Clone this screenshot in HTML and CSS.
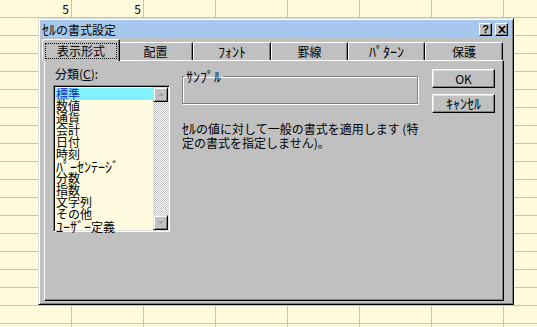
FILE: index.html
```html
<!DOCTYPE html>
<html lang="ja">
<head>
  <meta charset="UTF-8">
  <title>ｾﾙの書式設定</title>
  <link rel="stylesheet" href="styles.css">
</head>
<body>
  <div class="sheet">
    <div class="row">
      <div class="cell">5</div>
      <div class="cell">5</div>
    </div>
  </div>

  <div class="dialog">
    <div class="titlebar">
      <span class="title"><span class="hw">ｾﾙ</span>の書式設定</span>
      <div class="caption-btns">
        <span class="cap-btn help">?</span>
        <span class="cap-btn">
          <svg width="8" height="7" viewBox="0 0 8 7"><path d="M0 0h2l2 2 2-2h2L5 3.5 8 7H6L4 5 2 7H0l3-3.5z" fill="#000"/></svg>
        </span>
      </div>
    </div>

    <div class="tabs">
      <div class="tab active" style="width:74px"><span class="focus">表示形式</span></div>
      <div class="tab" style="width:75px">配置</div>
      <div class="tab" style="width:78px"><span class="hw">ﾌｫﾝﾄ</span></div>
      <div class="tab" style="width:77px">罫線</div>
      <div class="tab" style="width:77px"><span class="hw">ﾊﾟﾀｰﾝ</span></div>
      <div class="tab" style="width:78px">保護</div>
    </div>

    <div class="panel">
      <div class="col-left">
        <div class="label">分類(<u>C</u>):</div>
        <div class="listbox">
          <ul class="items">
            <li class="sel">標準</li>
            <li>数値</li>
            <li>通貨</li>
            <li>会計</li>
            <li>日付</li>
            <li>時刻</li>
            <li><span class="hw">ﾊﾟｰｾﾝﾃｰｼﾞ</span></li>
            <li>分数</li>
            <li>指数</li>
            <li>文字列</li>
            <li>その他</li>
            <li><span class="hw">ﾕｰｻﾞｰ</span>定義</li>
          </ul>
          <div class="scrollbar">
            <div class="sb-btn"><span class="arrow up"></span></div>
            <div class="sb-track"></div>
            <div class="sb-btn"><span class="arrow down"></span></div>
          </div>
        </div>
      </div>

      <div class="col-mid">
        <fieldset class="sample">
          <legend><span class="hw">ｻﾝﾌﾟﾙ</span></legend>
        </fieldset>
        <p class="desc"><span class="hw">ｾﾙ</span>の値に対して一般の書式を適用します (特<br>定の書式を指定しません)。</p>
      </div>

      <div class="col-right">
        <button class="btn">OK</button>
        <button class="btn"><span class="hw">ｷｬﾝｾﾙ</span></button>
      </div>
    </div>
  </div>
</body>
</html>
```

FILE: styles.css
```css
* {
  margin: 0;
  padding: 0;
  box-sizing: border-box;
}
body {
  width: 537px;
  height: 327px;
  overflow: hidden;
  font-family: "Noto Sans CJK JP", "DejaVu Sans", sans-serif;
  font-size: 12px;
  color: #000;
  position: relative;
}
/* half-width katakana is drawn a little larger, like the old UI font */
.hw {
  font-size: 14px;
}
.sheet {
  width: 537px;
  height: 327px;
  background-color: #fffadc;
  background-image:
    linear-gradient(to right, transparent 71px, #cdc5a3 71px),
    linear-gradient(to bottom, transparent 17px, #cdc5a3 17px);
  background-size: 72px 18px;
}
.row {
  display: flex;
}
.cell {
  width: 72px;
  height: 17px;
  line-height: 17px;
  text-align: right;
  padding-right: 3px;
}

/* dialog window */
.dialog {
  position: absolute;
  left: 38px;
  top: 18px;
  width: 476px;
  height: 287px;
  background: #c0c0c0;
  border: 1px solid;
  border-color: #dfdfdf #000 #000 #dfdfdf;
  box-shadow: inset 1px 1px #fff, inset -1px -1px #808080;
  padding: 1px 2px;
  display: flex;
  flex-direction: column;
}
.titlebar {
  height: 18px;
  background: #a6c8ee;
  display: flex;
  align-items: center;
  justify-content: space-between;
  padding: 0 3px 0 1px;
}
.title {
  line-height: 18px;
}
.caption-btns {
  display: flex;
  gap: 3px;
}
.cap-btn {
  width: 13px;
  height: 13px;
  background: #c0c0c0;
  border: 1px solid;
  border-color: #fff #000 #000 #fff;
  box-shadow: inset -1px -1px #808080;
  display: flex;
  align-items: center;
  justify-content: center;
  font-family: "Liberation Sans", sans-serif;
  font-weight: bold;
  font-size: 11px;
  line-height: 1;
}

/* tabs */
.tabs {
  height: 22px;
  display: flex;
  align-items: flex-end;
  padding-left: 3px;
}
.tab {
  height: 18px;
  border: 1px solid;
  border-bottom: none;
  border-color: #fff #000 transparent #fff;
  border-radius: 2px 2px 0 0;
  box-shadow: inset -1px 0 #808080;
  text-align: center;
  line-height: 17px;
  background: #c0c0c0;
}
.tab.active {
  height: 22px;
  margin: 0 -2px -1px;
  position: relative;
  z-index: 1;
  width: 78px !important;
  padding-top: 3px;
}
.focus {
  display: block;
  margin: 0 2px;
  height: 16px;
  line-height: 15px;
  outline: 1px dotted #000;
  outline-offset: -1px;
}

/* tab page */
.panel {
  height: 241px;
  margin: 0 7px 2px 3px;
  border: 1px solid;
  border-color: #fff #000 #000 #fff;
  box-shadow: inset -1px -1px #808080;
  display: flex;
  align-items: flex-start;
}
.col-left {
  margin: 6px 0 0 8px;
  width: 117px;
}
.label {
  line-height: 14px;
  padding-left: 2px;
  margin-bottom: 4px;
}
.listbox {
  height: 147px;
  display: flex;
  background: #fffbe0;
  border: 1px solid;
  border-color: #808080 #fff #fff #808080;
  box-shadow: inset 1px 1px #000, inset -1px -1px #dfdfdf;
  padding: 1px;
}
.items {
  list-style: none;
  flex: 1;
  padding-top: 1px;
}
.items li {
  height: 12px;
  line-height: 12px;
  padding-left: 1px;
  white-space: nowrap;
}
.items li.sel {
  background: #82f2ff;
  color: #1428c8;
}
.scrollbar {
  width: 15px;
  display: flex;
  flex-direction: column;
}
.sb-btn {
  height: 15px;
  background: #c0c0c0;
  border: 1px solid;
  border-color: #dfdfdf #000 #000 #dfdfdf;
  box-shadow: inset 1px 1px #fff, inset -1px -1px #808080;
  display: flex;
  align-items: center;
  justify-content: center;
}
.sb-track {
  flex: 1;
  background: repeating-conic-gradient(#c0c0c0 0 25%, #fff 0 50%) 0 0 / 2px 2px;
}
.arrow {
  width: 0;
  height: 0;
  border-left: 3px solid transparent;
  border-right: 3px solid transparent;
}
.arrow.up {
  border-bottom: 3px solid #a0a0a0;
}
.arrow.down {
  border-top: 3px solid #a0a0a0;
}

.col-mid {
  margin: 9px 0 0 12px;
  width: 236px;
}
.sample {
  height: 34px;
  border: 1px solid #808080;
  box-shadow: inset 1px 1px #fff, 1px 1px #fff;
  padding: 0;
}
.sample legend {
  padding: 0 2px;
  margin-left: 1px;
  line-height: 12px;
}
.desc {
  margin-top: 17px;
  line-height: 14px;
  white-space: nowrap;
}

.col-right {
  margin: 8px 0 0 14px;
  display: flex;
  flex-direction: column;
  gap: 6px;
}
.btn {
  width: 63px;
  height: 19px;
  background: #c0c0c0;
  font: inherit;
  border: 1px solid;
  border-color: #fff #000 #000 #fff;
  box-shadow: inset -1px -1px #808080, inset 1px 1px #dfdfdf;
  line-height: 16px;
}
```
